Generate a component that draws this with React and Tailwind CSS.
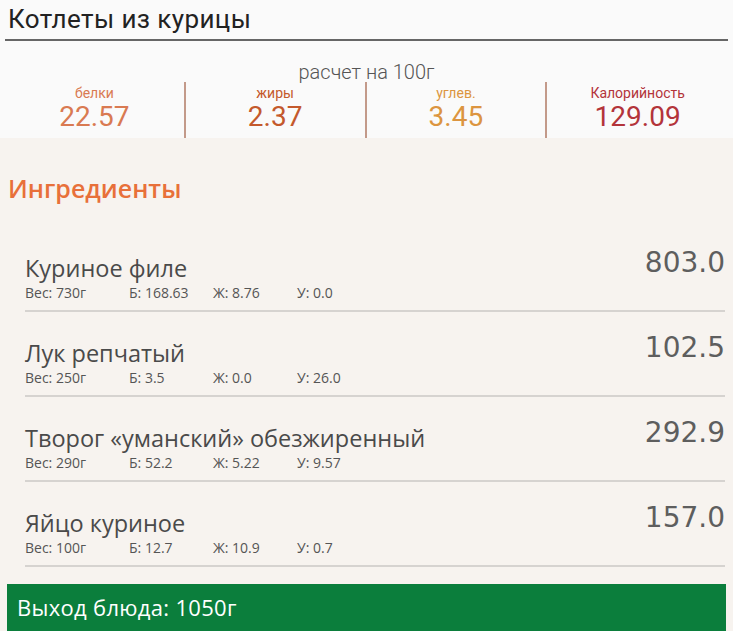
import React from "react";

const stats = [
  { label: "белки", value: "22.57", color: "text-[#d97a52]" },
  { label: "жиры", value: "2.37", color: "text-[#c4592c]" },
  { label: "углев.", value: "3.45", color: "text-[#dc9540]" },
  { label: "Калорийность", value: "129.09", color: "text-[#b3343a]" },
];

const items = [
  { name: "Куриное филе", w: "730г", b: "168.63", j: "8.76", u: "0.0", kcal: "803.0" },
  { name: "Лук репчатый", w: "250г", b: "3.5", j: "0.0", u: "26.0", kcal: "102.5" },
  { name: "Творог «уманский» обезжиренный", w: "290г", b: "52.2", j: "5.22", u: "9.57", kcal: "292.9" },
  { name: "Яйцо куриное", w: "100г", b: "12.7", j: "10.9", u: "0.7", kcal: "157.0" },
];

export default function App() {
  return (
    <div className="w-[733px] h-[631px] overflow-hidden bg-[#f7f3ef] font-['Open_Sans',sans-serif]">
      <div className="bg-[#fafafa] h-[138px] px-[5px] pt-[4px] font-['Roboto',sans-serif]">
        <div className="border-b-2 border-[#666] h-[37px] pl-[3px] text-[26px] tracking-[0.4px] leading-[30px] text-[#222]">
          Котлеты из курицы
        </div>
        <div className="text-center text-[20px] font-light leading-[22px] text-[#555] mt-[20px]">расчет на 100г</div>
        <div className="grid grid-cols-4 h-[56px] -mt-[1px]">
          {stats.map((s, i) => (
            <div
              key={s.label}
              className={`flex flex-col items-center ${i < 3 ? "border-r-2 border-[#c39a8a]" : ""}`}
            >
              <div className={`text-[14px] leading-[16px] mt-[3px] ${s.color}`}>{s.label}</div>
              <div className={`text-[28px] leading-[32px] ${s.color}`}>{s.value}</div>
            </div>
          ))}
        </div>
      </div>
      <div className="pl-[8px] pt-[34px] text-[25px] leading-[32px] font-semibold text-[#e8703a]">Ингредиенты</div>
      <div className="pl-[25px] pr-[8px] mt-[23px]">
        {items.map((it) => (
          <div key={it.name} className="flex justify-between border-b-2 border-[#d6d3d0] h-[85px] pt-[26px]">
            <div>
              <div className="text-[23.5px] leading-[30px] text-[#4a4a4a]">{it.name}</div>
              <div className="flex text-[14px] leading-[18px] text-[#555] mt-[1px]">
                <span className="w-[104px]">Вес: {it.w}</span>
                <span className="w-[84px]">Б: {it.b}</span>
                <span className="w-[84px]">Ж: {it.j}</span>
                <span>У: {it.u}</span>
              </div>
            </div>
            <div className="font-['DejaVu_Sans',sans-serif] text-[28px] leading-[32px] text-[#5e5e5e] -mt-[6px]">{it.kcal}</div>
          </div>
        ))}
      </div>
      <div className="mx-[7px] mt-[17px] h-[47px] bg-[#0b7e3c] flex items-center pl-[10px] text-white text-[22px] tracking-[0.3px] font-medium">
        Выход блюда: 1050г
      </div>
    </div>
  );
}
